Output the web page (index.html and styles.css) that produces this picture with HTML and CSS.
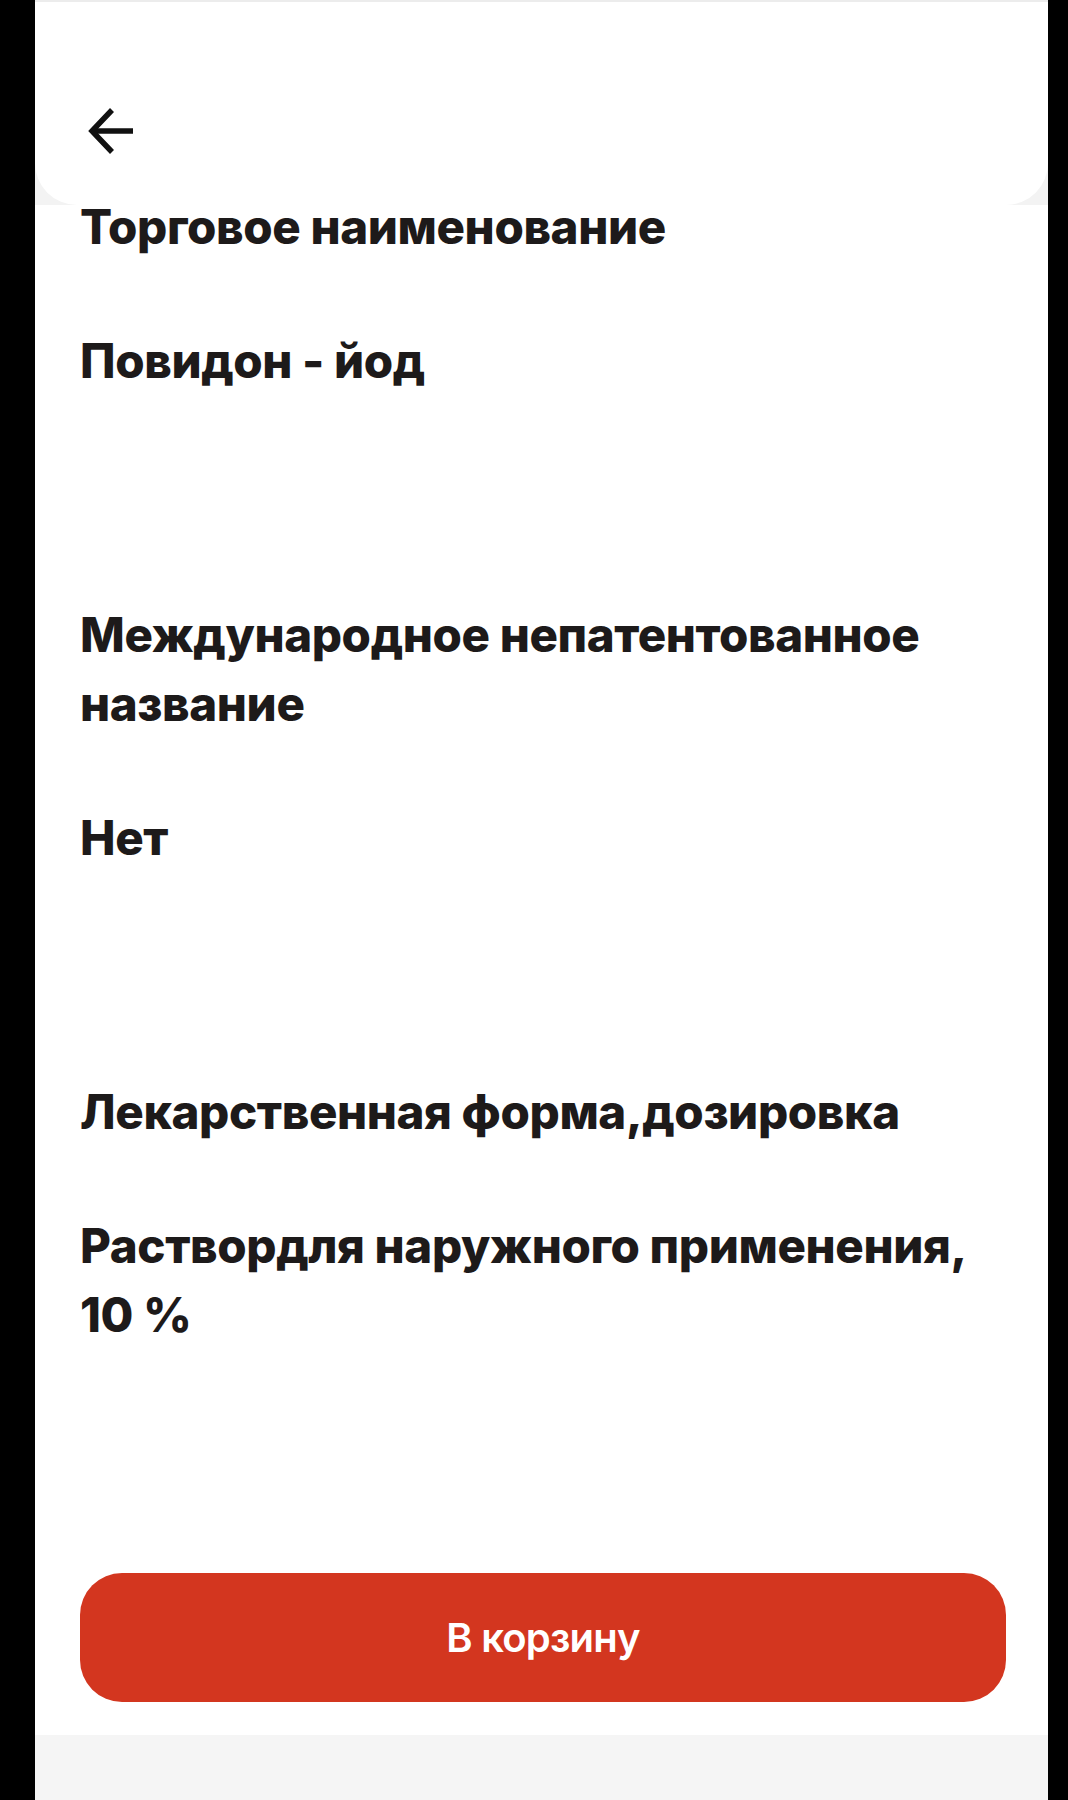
FILE: index.html
```html
<!DOCTYPE html>
<html lang="ru">
<head>
<meta charset="utf-8">
<title>Повидон - йод</title>
<link rel="stylesheet" href="styles.css">
</head>
<body>
<div class="screen">
  <header class="topbar">
    <div class="topcard">
      <button class="back" aria-label="Назад">
        <svg width="46" height="48" viewBox="0 0 46 48" fill="none" stroke="#111" stroke-width="5.5" stroke-linecap="butt" stroke-linejoin="miter">
          <path d="M45 24H5"/>
          <path d="M24 3L4 24L24 45"/>
        </svg>
      </button>
    </div>
  </header>
  <main class="content">
    <section class="field field-first">
      <h2 class="label">Торговое наименование</h2>
      <p class="value">Повидон - йод</p>
    </section>
    <section class="field">
      <h2 class="label">Международное непатентованное название</h2>
      <p class="value">Нет</p>
    </section>
    <section class="field">
      <h2 class="label">Лекарственная форма,дозировка</h2>
      <p class="value">Раствордля наружного применения, 10&nbsp;%</p>
    </section>
    <div class="actions">
      <button class="cart">В корзину</button>
    </div>
  </main>
  <footer class="bottombar"></footer>
</div>
</body>
</html>
```
FILE: styles.css
```css
* { box-sizing: border-box; }
html, body { margin: 0; padding: 0; }
body {
  background: #000;
  font-family: Inter, "Liberation Sans", Arial, sans-serif;
  color: #1d1a1a;
}
.screen {
  margin: 0 20px 0 35px;
  width: 1013px;
  min-height: 1800px;
  background: #fff;
  display: flex;
  flex-direction: column;
}
.topbar {
  background: #f3f3f3;
  height: 205px;
  border-top: 2px solid #ececec;
}
.topcard {
  background: #fff;
  height: 203px;
  border-radius: 0 0 42px 42px;
  padding: 105px 0 0 53px;
}
.back {
  background: none;
  border: 0;
  padding: 0;
  width: 46px;
  height: 48px;
  display: block;
  cursor: pointer;
}
.back svg { display: block; }
.content {
  flex: 1;
  padding: 0 43px 0 45px;
  display: flex;
  flex-direction: column;
}
.field { margin-top: 205px; }
.field-first { margin-top: -13px; }
.label, .value {
  margin: 0;
  font-size: 47.5px;
  line-height: 69px;
  font-weight: 800;
  letter-spacing: -0.4px;
}
.value { margin-top: 65px; }
.actions { margin-top: 224px; }
.cart {
  width: 926px;
  height: 129px;
  border: 0;
  border-radius: 42px;
  background: #d3361f;
  color: #fff;
  font-family: Inter, "Liberation Sans", Arial, sans-serif;
  font-size: 40px;
  font-weight: 600;
  letter-spacing: -0.8px;
  display: flex;
  align-items: center;
  justify-content: center;
  padding-bottom: 2px;
}
.bottombar {
  margin-top: 33px;
  height: 65px;
  background: #f5f5f5;
}
```
